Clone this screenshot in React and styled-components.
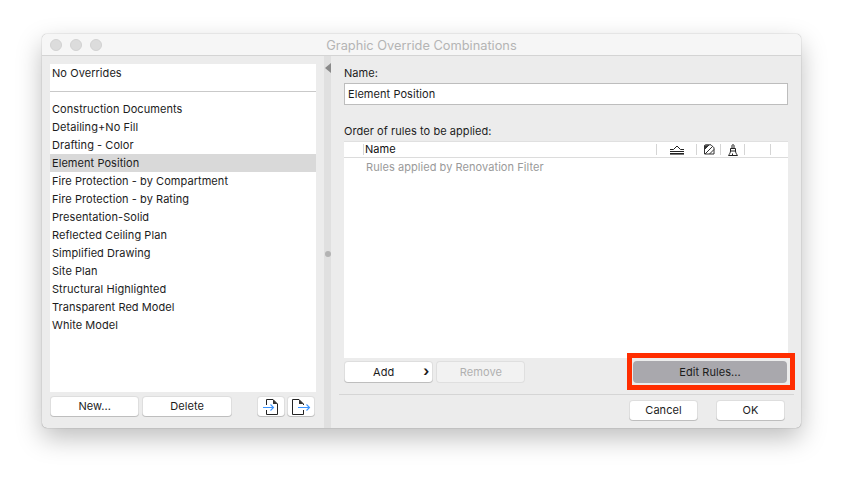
import React from "react";
import styled, { createGlobalStyle } from "styled-components";

const overrides = [
  "Construction Documents",
  "Detailing+No Fill",
  "Drafting - Color",
  "Element Position",
  "Fire Protection - by Compartment",
  "Fire Protection - by Rating",
  "Presentation-Solid",
  "Reflected Ceiling Plan",
  "Simplified Drawing",
  "Site Plan",
  "Structural Highlighted",
  "Transparent Red Model",
  "White Model",
];

function ImportIcon() {
  return (
    <svg width="18" height="18" viewBox="0 0 18 18" fill="none">
      <path d="M4.500 7V1.500H11L15.500 6V16.500H4.500V12" stroke="#222" strokeWidth="1" />
      <path d="M11 1.500L15.500 6H11Z" fill="#333" />
      <path d="M1 9.500H11.500M8.500 6.500L11.500 9.500L8.500 12.500" stroke="#3d95ff" strokeWidth="1.100" />
    </svg>
  );
}

function ExportIcon() {
  return (
    <svg width="20" height="18" viewBox="0 0 20 18" fill="none">
      <path d="M12.500 7V6L8 1.500H1.500V16.500H12.500V12" stroke="#222" strokeWidth="1" />
      <path d="M8 1.500L12.500 6H8Z" fill="#333" />
      <path d="M7 9.500H18.500M15.500 6.500L18.500 9.500L15.500 12.500" stroke="#3d95ff" strokeWidth="1.100" />
    </svg>
  );
}

function LayerIcon() {
  return (
    <svg width="14" height="10" viewBox="0 0 14 10" fill="none">
      <path d="M0 4.500H3.500L7 1L10.500 4.500H14" stroke="#222" strokeWidth="1" />
      <path d="M0 6.500H14" stroke="#222" strokeWidth="1" />
      <path d="M0 8.800H14" stroke="#222" strokeWidth="1.600" />
    </svg>
  );
}

function HatchIcon() {
  return (
    <svg width="12" height="11" viewBox="0 0 12 11" fill="none">
      <path d="M1.500 10V2C1.500 1.200 2 .8 2.800 .8H8L11 3.800V10Z" stroke="#333" strokeWidth="1" />
      <path d="M1.500 5.500L6 1M2 10L9.500 2.500M6.500 10L11 5.500" stroke="#333" strokeWidth="1" />
      <path d="M1.500 1.500L6 1L1.500 5.500Z" fill="#333" />
    </svg>
  );
}

function BrushIcon() {
  return (
    <svg width="10" height="12" viewBox="0 0 10 12" fill="none">
      <path d="M4 4.500V1.500C4 .4 6 .4 6 1.500V4.500" stroke="#222" strokeWidth="1" />
      <path d="M2.500 4.500H7.500V7H2.500Z" stroke="#222" strokeWidth="1" />
      <path d="M2.500 7C2.500 8.500 1.500 10 .5 11.500H9.500C8.500 10 7.500 8.500 7.500 7" stroke="#222" strokeWidth="1" />
      <path d="M4.500 9.500V11.500" stroke="#222" strokeWidth="1" />
    </svg>
  );
}

function App() {
  return (
    <Page>
      <GlobalStyle />
      <Window>
        <TitleBar>
          <Lights>
            <Light />
            <Light />
            <Light />
          </Lights>
          <Title>Graphic Override Combinations</Title>
        </TitleBar>
        <Body>
          <LeftPane>
            <List>
              <DefaultRow>No Overrides</DefaultRow>
              <Rows>
                {overrides.map((name) => (
                  <Row key={name} $selected={name === "Element Position"}>
                    {name}
                  </Row>
                ))}
              </Rows>
            </List>
            <ListButtons>
              <ListButton>New...</ListButton>
              <ListButton>Delete</ListButton>
              <IconButtons>
                <IconButton>
                  <ImportIcon />
                </IconButton>
                <IconButton>
                  <ExportIcon />
                </IconButton>
              </IconButtons>
            </ListButtons>
          </LeftPane>
          <Splitter>
            <CollapseArrow />
            <Grip />
          </Splitter>
          <RightPane>
            <Fields>
              <Label>Name:</Label>
              <NameInput>Element Position</NameInput>
              <OrderLabel>Order of rules to be applied:</OrderLabel>
              <RulesTable>
                <TableHead>
                  <NameColumn>Name</NameColumn>
                  <IconColumn $width={40}>
                    <LayerIcon />
                  </IconColumn>
                  <IconColumn $width={24}>
                    <HatchIcon />
                  </IconColumn>
                  <IconColumn $width={24}>
                    <BrushIcon />
                  </IconColumn>
                  <IconColumn $width={26} />
                  <IconColumn $width={18} />
                </TableHead>
                <TableNote>Rules applied by Renovation Filter</TableNote>
              </RulesTable>
              <RuleButtons>
                <AddButton>
                  Add
                  <Chevron>›</Chevron>
                </AddButton>
                <RemoveButton>Remove</RemoveButton>
                <EditRulesButton>Edit Rules...</EditRulesButton>
              </RuleButtons>
            </Fields>
            <DialogButtons>
              <DialogButton>Cancel</DialogButton>
              <DialogButton>OK</DialogButton>
            </DialogButtons>
          </RightPane>
        </Body>
      </Window>
    </Page>
  );
}

export default App;

const GlobalStyle = createGlobalStyle`
  html, body {
    margin: 0;
    background: #ffffff;
  }
  * {
    box-sizing: border-box;
  }
`;

const Page = styled.div`
  width: 843px;
  height: 478px;
  padding: 34px 0 0 42px;
  overflow: hidden;
  font-family: "Inter", "Liberation Sans", sans-serif;
  font-size: 11px;
  letter-spacing: 0.06px;
  color: #1c1c1c;
`;

const Window = styled.div`
  width: 759px;
  height: 394px;
  display: flex;
  flex-direction: column;
  background: #ececec;
  border-radius: 5px;
  box-shadow: 0 0 1px rgba(0, 0, 0, 0.5), 0 10px 26px rgba(0, 0, 0, 0.26);
`;

const TitleBar = styled.div`
  height: 22px;
  display: flex;
  align-items: center;
  position: relative;
  flex-shrink: 0;
  padding-left: 8px;
  background: #f6f6f6;
  border-bottom: 1px solid #d4d4d4;
  border-radius: 5px 5px 0 0;
`;

const Lights = styled.div`
  display: flex;
  gap: 8px;
`;

const Light = styled.span`
  width: 12px;
  height: 12px;
  border-radius: 50%;
  background: #dcdcdc;
  border: 1px solid #d2d2d2;
`;

const Title = styled.div`
  position: absolute;
  left: 0;
  right: 0;
  top: 4px;
  text-align: center;
  font-size: 12.8px;
  line-height: 16px;
  letter-spacing: 0;
  color: #b4b4b4;
`;

const Body = styled.div`
  flex: 1;
  display: flex;
  min-height: 0;
`;

const LeftPane = styled.div`
  width: 282px;
  display: flex;
  flex-direction: column;
  padding: 8px 8px 0;
`;

const List = styled.div`
  height: 328px;
  background: #ffffff;
`;

const DefaultRow = styled.div`
  height: 28px;
  padding: 3px 2px 0;
  line-height: 12px;
  border-bottom: 1px solid #c9c9c9;
`;

const Rows = styled.div`
  padding-top: 8px;
`;

const Row = styled.div`
  height: 18px;
  line-height: 18px;
  padding-left: 2px;
  background: ${(p) => (p.$selected ? "#d9d9d9" : "transparent")};
`;

const ListButtons = styled.div`
  display: flex;
  gap: 3px;
  margin-top: 4px;
`;

const PushButton = styled.div`
  height: 21px;
  display: flex;
  align-items: center;
  justify-content: center;
  padding-bottom: 1px;
  background: #ffffff;
  border-radius: 4px;
  box-shadow: inset 0 0 0 1px rgba(0, 0, 0, 0.13), inset 0 -1px 0 rgba(0, 0, 0, 0.14);
`;

const ListButton = styled(PushButton)`
  width: 89.4px;
`;

const IconButtons = styled.div`
  display: flex;
  gap: 2px;
  margin-left: 22px;
`;

const IconButton = styled(PushButton)`
  width: 28px;
  padding: 1px 0 0;
`;

const Splitter = styled.div`
  width: 7px;
  display: flex;
  flex-direction: column;
  align-items: flex-end;
  padding-top: 7px;
  background: #e0e0e0;
`;

const CollapseArrow = styled.div`
  border-top: 5px solid transparent;
  border-bottom: 5px solid transparent;
  border-right: 6px solid #8a8a8a;
`;

const Grip = styled.div`
  width: 6px;
  height: 6px;
  margin: 178px 0 0;
  border-radius: 50%;
  background: #b3b3b3;
`;

const RightPane = styled.div`
  flex: 1;
  display: flex;
  flex-direction: column;
  padding: 0 7px 0 8px;
`;

const Fields = styled.div`
  display: flex;
  flex-direction: column;
  padding: 10px 6px 0 5px;
`;

const Label = styled.div`
  height: 17px;
  line-height: 14px;
`;

const NameInput = styled.div`
  height: 22px;
  line-height: 20px;
  padding-left: 3px;
  background: #ffffff;
  border: 1px solid #bdbdbd;
`;

const OrderLabel = styled(Label)`
  margin-top: 19px;
`;

const RulesTable = styled.div`
  height: 217px;
  background: #ffffff;
`;

const TableHead = styled.div`
  height: 17px;
  display: flex;
  align-items: center;
  border-top: 1px solid #e0e0e0;
  border-bottom: 1px solid #dcdcdc;
`;

const NameColumn = styled.div`
  flex: 1;
  height: 11px;
  line-height: 11px;
  margin-left: 19px;
  padding-left: 1px;
  color: #111111;
  border-left: 1px solid #d5d5d5;
`;

const IconColumn = styled.div`
  width: ${(p) => p.$width}px;
  height: 11px;
  display: flex;
  align-items: center;
  justify-content: center;
  border-left: 1px solid #d5d5d5;
`;

const TableNote = styled.div`
  padding: 2px 0 0 22px;
  line-height: 14px;
  color: #9a9a9a;
`;

const RuleButtons = styled.div`
  display: flex;
  gap: 3px;
  margin-top: 3px;
`;

const AddButton = styled(PushButton)`
  width: 89.4px;
  height: 22px;
  position: relative;
  padding-right: 10px;
`;

const Chevron = styled.span`
  position: absolute;
  right: 4px;
  top: 2px;
  font-size: 14px;
  line-height: 16px;
  font-weight: 700;
`;

const RemoveButton = styled(PushButton)`
  width: 89px;
  height: 22px;
  color: #b0b0b0;
  background: #f2f2f2;
  box-shadow: inset 0 0 0 1px rgba(0, 0, 0, 0.08);
`;

const EditRulesButton = styled(PushButton)`
  width: 154px;
  height: 22px;
  margin-left: auto;
  margin-right: 1px;
  position: relative;
  background: #a9a8ad;
  box-shadow: none;

  &::after {
    content: "";
    position: absolute;
    top: -8px;
    right: -8px;
    bottom: -7px;
    left: -6px;
    border: 5px solid #ff2d00;
  }
`;

const DialogButtons = styled.div`
  display: flex;
  justify-content: flex-end;
  gap: 18px;
  margin-top: 11px;
  padding: 5px 9px 0 0;
  border-top: 1px solid #d5d5d5;
`;

const DialogButton = styled(PushButton)`
  width: 69px;
`;
